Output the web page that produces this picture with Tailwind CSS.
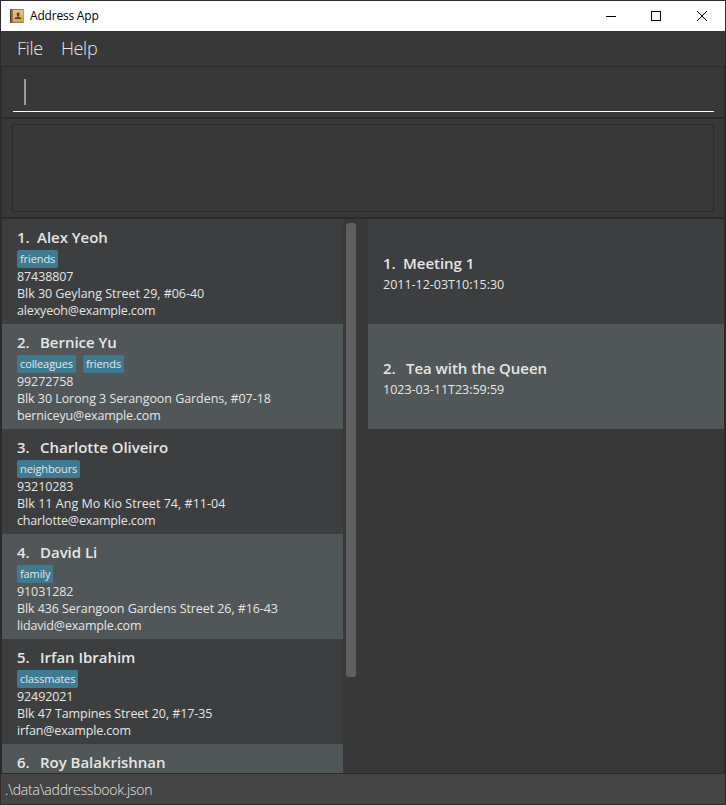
<!DOCTYPE html>
<html lang="en">
<head>
<meta charset="utf-8">
<title>Address App</title>
<script src="https://cdn.jsdelivr.net/npm/@tailwindcss/browser@4"></script>
</head>
<body class="w-[726px] h-[805px] overflow-hidden bg-[#2b2b2b] font-['Open_Sans','Noto_Sans',sans-serif] text-[#e6e6e6]">
<div class="flex flex-col w-[726px] h-[805px] pt-px">
  <header class="flex items-center h-[30px] shrink-0 mx-px bg-white text-black">
    <svg class="ml-[9px] shrink-0" width="14" height="14" viewBox="0 0 14 14">
      <defs><linearGradient id="g" x1="0" y1="0" x2="0" y2="1"><stop offset="0" stop-color="#e9c68a"/><stop offset="1" stop-color="#d6a04a"/></linearGradient></defs>
      <rect width="14" height="14" rx="1" fill="#a07c48"/>
      <rect x="3" y="1" width="10.500" height="12" fill="url(#g)"/>
      <rect width="1.500" height="14" rx=".5" fill="#4b4039"/>
      <rect x="1.500" width="1.500" height="14" fill="#94774e"/>
      <rect x="6.800" y="3.500" width="2.600" height="3.500" rx="1" fill="#594425"/>
      <path d="M7.500 6.500h1.200v1.500l2.500 .6v1.400H5V8.600l2.500-.6z" fill="#594425"/>
    </svg>
    <h1 class="ml-[6px] text-[12px] tracking-[-0.200px] leading-4">Address App</h1>
    <svg width="118" height="12" viewBox="0 0 118 12" class="ml-auto mr-[7px]" fill="none" stroke="#000">
      <path d="M6 6.500h10"/>
      <rect x="51.500" y="1.500" width="9" height="9"/>
      <path d="M97 1l10 10M107 1l-10 10"/>
    </svg>
  </header>
  <nav class="flex h-[35px] shrink-0 mx-px pl-4 gap-[18px] bg-[#383838] text-[18px] font-light leading-[35px] tracking-[-0.3px]">
    <span>File</span><span>Help</span>
  </nav>
  <section class="mt-px mx-[2px] h-[50px] shrink-0 bg-[#383838] pl-[11px] pr-[10px] pt-[12px]">
    <div class="h-[33px] border-b border-white pl-[11px]"><div class="w-[2px] h-[26px] bg-[#9c9c9c]"></div></div>
  </section>
  <section class="mt-[2px] mx-[2px] h-[98px] shrink-0 bg-[#383838] px-[10px] pt-[5px]">
    <div class="h-[88px] border border-[#2b2b2b]"></div>
  </section>
  <main class="mt-[2px] mx-[2px] h-[554px] shrink-0 bg-[#383838] flex overflow-hidden">
    <ul id="people" class="w-[341px] shrink-0"></ul>
    <div class="w-[10px] h-[454px] mt-1 ml-[3px] mr-3 rounded-[3px] bg-[#606060] shrink-0"></div>
    <ul id="events" class="w-[356px] shrink-0"></ul>
  </main>
  <footer class="mt-px mx-px h-[30px] shrink-0 bg-[#444444] pl-1 text-[14px] font-light leading-[31px] tracking-[-0.2px]">.\data\addressbook.json</footer>
</div>
<script>
const people = [
  ['Alex Yeoh', ['friends'], '87438807', 'Blk 30 Geylang Street 29, #06-40', 'alexyeoh@example.com', 'tracking-[-0.04px]'],
  ['Bernice Yu', ['colleagues', 'friends'], '99272758', 'Blk 30 Lorong 3 Serangoon Gardens, #07-18', 'berniceyu@example.com', 'tracking-[-0.06px]'],
  ['Charlotte Oliveiro', ['neighbours'], '93210283', 'Blk 11 Ang Mo Kio Street 74, #11-04', 'charlotte@example.com', 'tracking-[0.03px]'],
  ['David Li', ['family'], '91031282', 'Blk 436 Serangoon Gardens Street 26, #16-43', 'lidavid@example.com', 'tracking-[-0.08px]'],
  ['Irfan Ibrahim', ['classmates'], '92492021', 'Blk 47 Tampines Street 20, #17-35', 'irfan@example.com', 'tracking-[-0.09px]'],
  ['Roy Balakrishnan']
];
const events = [['Meeting 1', '2011-12-03T10:15:30'], ['Tea with the Queen', '1023-03-11T23:59:59']];
const shade = i => i % 2 ? 'bg-[#515658]' : 'bg-[#3c3e3f]';
const heading = (i, t) => `<h2 class="flex h-[21px] text-[15px] leading-[21px] font-semibold tracking-[-0.03px]"><span class="${i ? 'w-[23px]' : 'w-[20px]'}">${i + 1}.</span><span>${t}</span></h2>`;
const line = (t, tracking) => `<p class="h-[17px] text-[12.5px] leading-[17px] ${tracking}">${t}</p>`;
const details = p => `<div class="flex gap-[7px] mt-[2px] h-[18px]">${p[1].map(t => `<span class="h-[18px] px-[3px] rounded-[2px] bg-[#3e7b91] text-[11px] leading-[17px] tracking-[-0.1px]">${t}</span>`).join('')}</div>
${line(p[2], 'tracking-[-0.1px]')}${line(p[3], p[5])}${line(p[4], 'tracking-[-0.16px]')}`;
document.getElementById('people').innerHTML = people.map((p, i) => `
<li class="${p[1] ? 'h-[105px]' : 'h-[29px]'} pt-[8px] pl-[15px] whitespace-nowrap ${shade(i)}">${heading(i, p[0])}${p[1] ? details(p) : ''}</li>`).join('');
document.getElementById('events').innerHTML = events.map((e, i) => `
<li class="h-[105px] pt-[34px] pl-[15px] whitespace-nowrap ${shade(i)}">${heading(i, e[0])}<div class="pt-[2px]">${line(e[1], 'tracking-[-0.02px]')}</div></li>`).join('');
</script>
</body>
</html>
